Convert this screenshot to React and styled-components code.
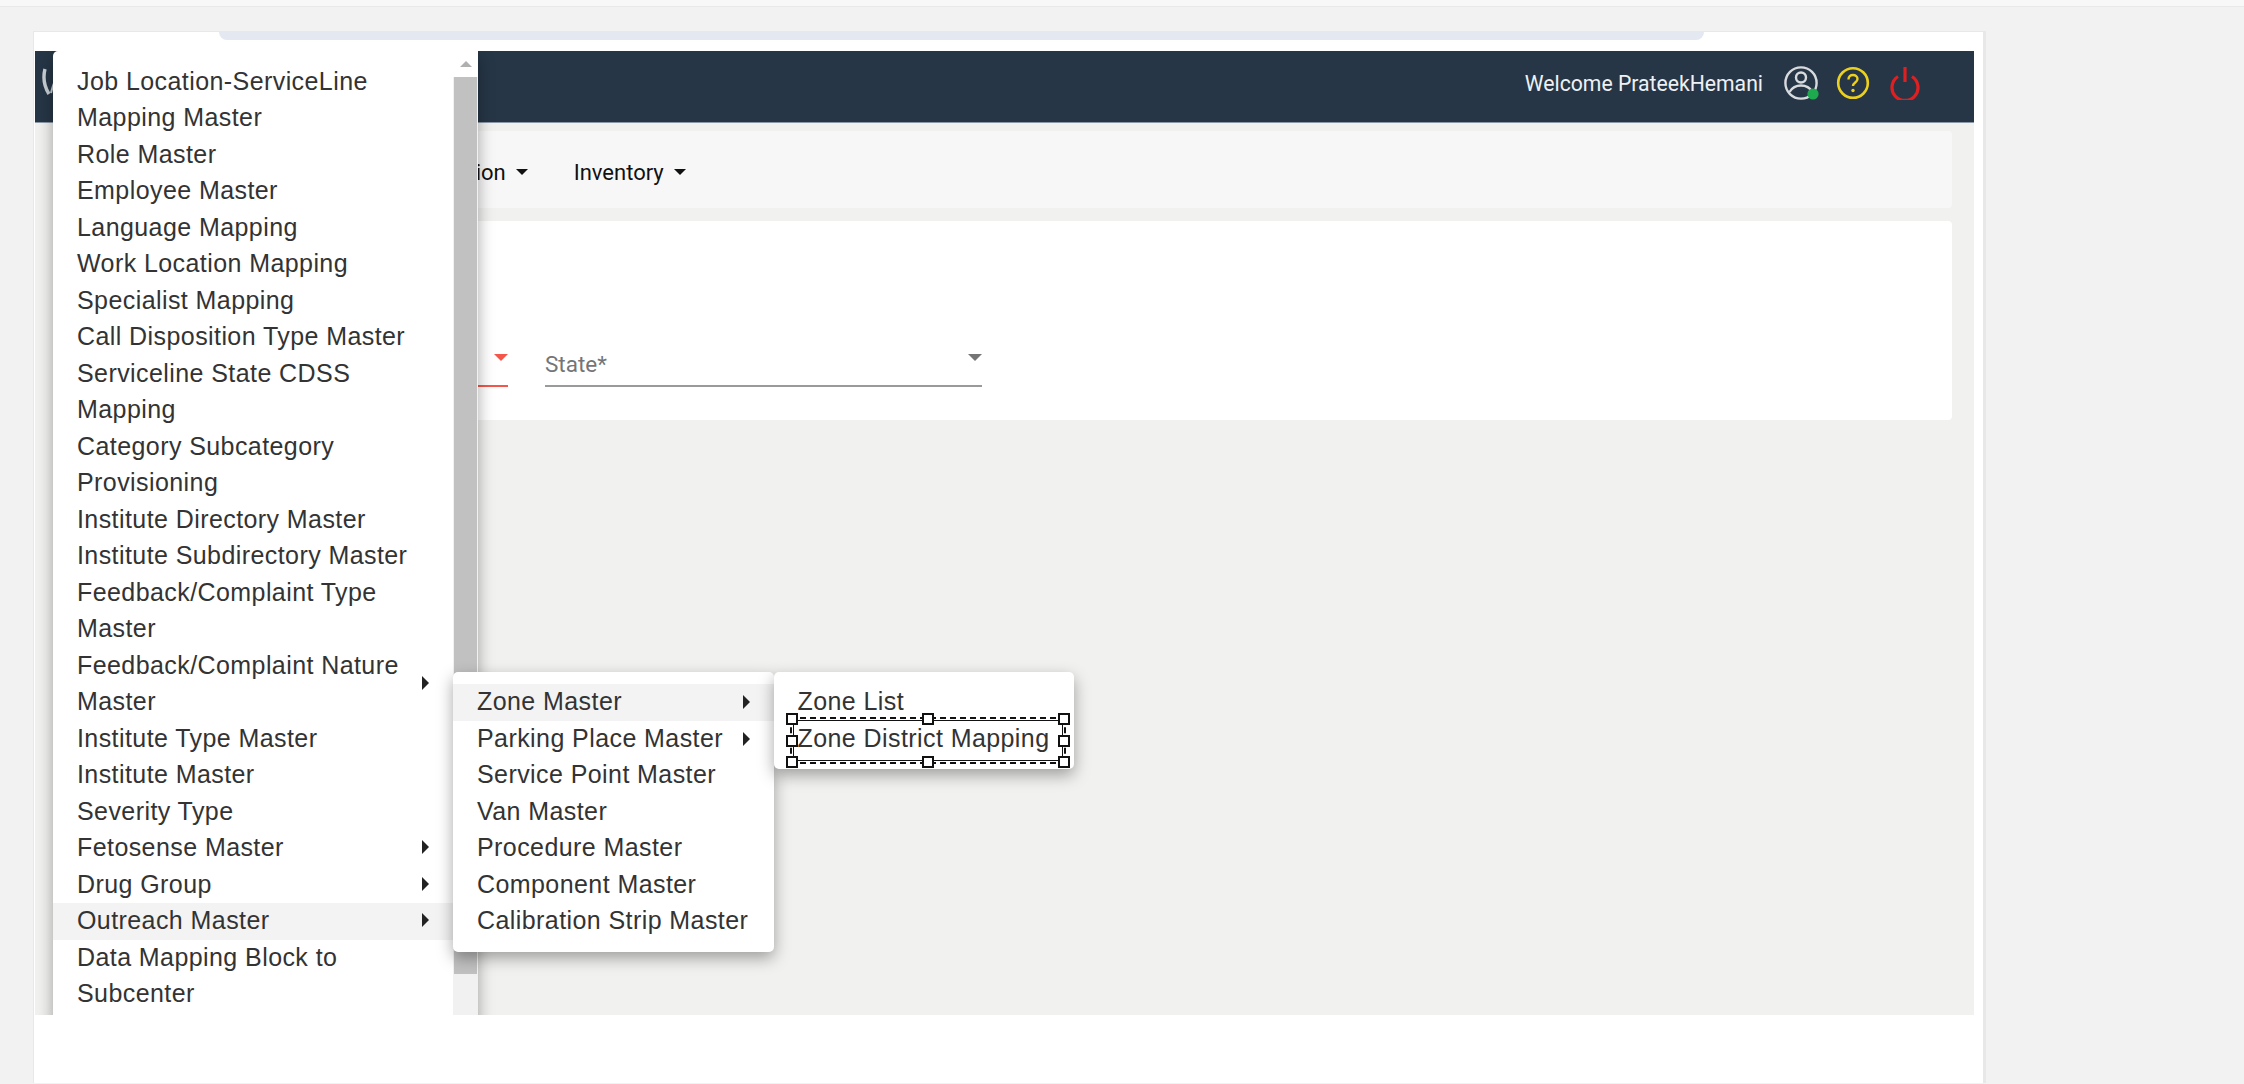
import React from "react";
import styled, { createGlobalStyle } from "styled-components";

const GlobalStyle = createGlobalStyle`
  html, body {
    margin: 0;
    padding: 0;
    background: #f2f2f2;
    height: 1084px;
    overflow: hidden;
  }
  * {
    box-sizing: border-box;
  }
`;

const Page = styled.div`
  height: 1084px;
  background: #f2f2f2;
`;

const TopStrip = styled.div`
  height: 7px;
  background: #f8f8f8;
  border-bottom: 1px solid #e9e9e9;
`;

const Paper = styled.div`
  width: 1953px;
  height: 1052px;
  margin: 24px 0 0 33px;
  background: #fff;
  border: 1px solid #e8e8e8;
  border-bottom: 0;
  border-right-width: 3px;
  padding-left: 1px;
`;

const TabStrip = styled.div`
  height: 19px;
  padding: 0 279px 0 184px;
  background: #fff;
`;

const Tab = styled.div`
  height: 8px;
  background: #e3e8f1;
  border-radius: 0 0 16px 16px;
`;

const Frame = styled.div`
  position: relative;
  width: 1939px;
  height: 964px;
  overflow: hidden;
  background: #f1f1ef;
`;

const Header = styled.header`
  height: 72px;
  display: flex;
  align-items: center;
  padding: 0 53px 7px 0;
  background: #263646;
  border-bottom: 1px solid #8b98a7;
`;

const Logo = styled.svg`
  width: 20px;
  height: 36px;
  margin: 0 auto 0 7px;
`;

const Welcome = styled.span`
  color: #eef1f4;
  font: 400 21.2px Roboto, sans-serif;
  margin-right: 20px;
`;

const IconRow = styled.div`
  display: flex;
  align-items: center;
  gap: 15px;
`;

const Content = styled.main`
  padding: 8px 22px 0 21px;
`;

const NavBar = styled.nav`
  height: 77px;
  display: flex;
  align-items: center;
  gap: 46px;
  padding: 5px 0 0 306px;
  background: #f7f7f7;
  border-radius: 4px;
`;

const NavItem = styled.span`
  display: flex;
  align-items: center;
  gap: 10px;
  color: #111;
  font: 400 22px Roboto, sans-serif;
`;

const Caret = styled.i`
  width: 0;
  height: 0;
  border-left: ${(p) => p.$size}px solid transparent;
  border-right: ${(p) => p.$size}px solid transparent;
  border-top: ${(p) => p.$size}px solid ${(p) => p.$color};
`;

const Card = styled.section`
  height: 199px;
  margin-top: 13px;
  padding: 108px 15px 0;
  display: flex;
  gap: 37px;
  background: #fff;
  border-radius: 4px;
`;

const Field = styled.div`
  width: 437px;
  height: 58px;
  display: flex;
  align-items: flex-start;
  justify-content: space-between;
  padding: 22px 0 0;
  border-bottom: 2px solid ${(p) => (p.$error ? "#f4574a" : "#9a9a9a")};
  color: #757575;
  font: 400 22.5px Roboto, sans-serif;
`;

const FieldCaret = styled(Caret)`
  margin: 3px 0 0;
`;

const Panel = styled.div`
  position: absolute;
  background: #fff;
  border-radius: 5px;
  box-shadow: 0 6px 16px rgba(0, 0, 0, 0.35);
  color: #333;
  font: 400 25px/34.57px "Liberation Sans", Arial, sans-serif;
  letter-spacing: 0.42px;
`;

const MainMenu = styled(Panel)`
  left: 18px;
  top: 0;
  width: 425px;
  height: 1000px;
  border-radius: 5px 0 0 0;
  padding: 12.5px 25px 0 0;
  overflow: hidden;
  line-height: 36.5px;
`;

const ZoneMenu = styled(Panel)`
  left: 418px;
  top: 621px;
  width: 321px;
  padding: 12px 0;
`;

const ZoneSubMenu = styled(Panel)`
  left: 739px;
  top: 621px;
  width: 300px;
  padding: 12px 0;
`;

const MenuItem = styled.div`
  position: relative;
  padding: 0 ${(p) => p.$right}px 2px ${(p) => p.$left}px;
  background: ${(p) => (p.$active ? "#f3f3f3" : "transparent")};
`;

// same row as MenuItem but for the main list, whose wrapped lines keep their pitch
const MainItem = styled(MenuItem)`
  padding-bottom: 0;
  top: -1px;
  background: none;

  &::before {
    content: "";
    position: absolute;
    left: 0;
    right: 0;
    top: 1px;
    bottom: -1px;
    z-index: -1;
    background: ${(p) => (p.$active ? "#f3f3f3" : "transparent")};
  }
`;

const MainList = styled.div`
  position: relative;
  z-index: 0;
`;

const ItemArrow = styled.i`
  position: absolute;
  right: 24px;
  top: calc(50% - 7px);
  width: 0;
  height: 0;
  border-top: 7px solid transparent;
  border-bottom: 7px solid transparent;
  border-left: 7px solid #222;
`;

const ScrollBar = styled.div`
  position: absolute;
  top: 0;
  right: 0;
  bottom: 0;
  width: 25px;
  background: #f1f1f1;
`;

const ScrollCap = styled.div`
  height: 26px;
  padding-top: 10px;
  background: #fff;
`;

const ScrollUp = styled.i`
  display: block;
  width: 0;
  height: 0;
  margin: 0 auto;
  border-left: 6px solid transparent;
  border-right: 6px solid transparent;
  border-bottom: 6px solid #b0b0b0;
`;

const ScrollThumb = styled.div`
  height: 897px;
  margin: 0 1px;
  background: #c1c1c1;
`;

const Selection = styled.div`
  position: absolute;
  left: 15.5px;
  right: 8.5px;
  top: 45px;
  height: 47px;
  border: 2px dashed #111;
  outline: 1px solid #111;
  outline-offset: -4px;
  pointer-events: none;
`;

const Handle = styled.b`
  position: absolute;
  width: 12px;
  height: 12px;
  left: ${(p) => p.$x}%;
  top: ${(p) => p.$y}%;
  margin: -6px 0 0 -6px;
  background: #fff;
  border: 2px solid #111;
`;

const mainItems = [
  { label: "Job Location-ServiceLine Mapping Master" },
  { label: "Role Master" },
  { label: "Employee Master" },
  { label: "Language Mapping" },
  { label: "Work Location Mapping" },
  { label: "Specialist Mapping" },
  { label: "Call Disposition Type Master" },
  { label: "Serviceline State CDSS Mapping" },
  { label: "Category Subcategory Provisioning" },
  { label: "Institute Directory Master" },
  { label: "Institute Subdirectory Master" },
  { label: "Feedback/Complaint Type Master" },
  { label: "Feedback/Complaint Nature Master", arrow: true },
  { label: "Institute Type Master" },
  { label: "Institute Master" },
  { label: "Severity Type" },
  { label: "Fetosense Master", arrow: true },
  { label: "Drug Group", arrow: true },
  { label: "Outreach Master", arrow: true, active: true },
  { label: "Data Mapping Block to Subcenter" },
];

const zoneItems = [
  { label: "Zone Master", arrow: true, active: true },
  { label: "Parking Place Master", arrow: true },
  { label: "Service Point Master" },
  { label: "Van Master" },
  { label: "Procedure Master" },
  { label: "Component Master" },
  { label: "Calibration Strip Master" },
];

const handles = [
  [0, 0], [50, 0], [100, 0],
  [0, 50], [100, 50],
  [0, 100], [50, 100], [100, 100],
];

const UserIcon = () => (
  <svg width="38" height="36" viewBox="0 0 38 36" fill="none">
    <circle cx="18" cy="18" r="15.6" stroke="#d8dbde" strokeWidth="2.4" />
    <circle cx="18" cy="12.5" r="5" stroke="#d8dbde" strokeWidth="2.4" />
    <path d="M6.5 27c3-5 7-6.5 11.5-6.5s8.5 1.5 11.5 6.5" stroke="#d8dbde" strokeWidth="2.4" />
    <circle cx="30" cy="29" r="5.6" fill="#1fa94f" />
  </svg>
);

const HelpIcon = () => (
  <svg width="34" height="34" viewBox="0 0 34 34" fill="none">
    <circle cx="17" cy="17" r="14.8" stroke="#ecd01e" strokeWidth="2.6" />
    <path d="M12.5 13.5c0-3 2-4.5 4.5-4.5s4.5 1.6 4.5 4c0 3.4-4.5 3.6-4.5 7" stroke="#ecd01e" strokeWidth="2.4" />
    <circle cx="17" cy="24.5" r="1.7" fill="#ecd01e" />
  </svg>
);

const PowerIcon = () => (
  <svg width="36" height="34" viewBox="0 0 36 34" fill="none">
    <path d="M13 10.5a13 13 0 1 0 14 0" stroke="#e02020" strokeWidth="3.2" />
    <path d="M20 1v15" stroke="#e02020" strokeWidth="3.2" />
  </svg>
);

const App = () => (
  <Page>
    <GlobalStyle />
    <TopStrip />
    <Paper>
      <TabStrip>
        <Tab />
      </TabStrip>
      <Frame>
        <Header>
          <Logo viewBox="0 0 20 36" fill="none">
            <path d="M3 4c-2 8-1 17 4 25" stroke="#c9d0d6" strokeWidth="3.4" />
            <path d="M9 28c1-4 2-8 4-12" stroke="#c9d0d6" strokeWidth="2" />
          </Logo>
          <Welcome>Welcome PrateekHemani</Welcome>
          <IconRow>
            <UserIcon />
            <HelpIcon />
            <PowerIcon />
          </IconRow>
        </Header>
        <Content>
          <NavBar>
            <NavItem>
              Administration <Caret $size={6} $color="#111" />
            </NavItem>
            <NavItem>
              Inventory <Caret $size={6} $color="#111" />
            </NavItem>
          </NavBar>
          <Card>
            <Field $error>
              <span />
              <FieldCaret $size={7} $color="#f4574a" />
            </Field>
            <Field>
              <span>State*</span>
              <FieldCaret $size={7} $color="#757575" />
            </Field>
          </Card>
        </Content>

        <MainMenu>
          <MainList>
            {mainItems.map((item) => (
              <MainItem key={item.label} $left={24} $right={40} $active={item.active}>
                {item.label}
                {item.arrow && <ItemArrow />}
              </MainItem>
            ))}
          </MainList>
          <ScrollBar>
            <ScrollCap>
              <ScrollUp />
            </ScrollCap>
            <ScrollThumb />
          </ScrollBar>
        </MainMenu>

        <ZoneMenu>
          {zoneItems.map((item) => (
            <MenuItem key={item.label} $left={24} $right={20} $active={item.active}>
              {item.label}
              {item.arrow && <ItemArrow />}
            </MenuItem>
          ))}
        </ZoneMenu>

        <ZoneSubMenu>
          <MenuItem $left={23.5} $right={20}>Zone List</MenuItem>
          <MenuItem $left={23.5} $right={20}>Zone District Mapping</MenuItem>
          <Selection>
            {handles.map(([x, y]) => (
              <Handle key={`${x}-${y}`} $x={x} $y={y} />
            ))}
          </Selection>
        </ZoneSubMenu>
      </Frame>
    </Paper>
  </Page>
);

export default App;
